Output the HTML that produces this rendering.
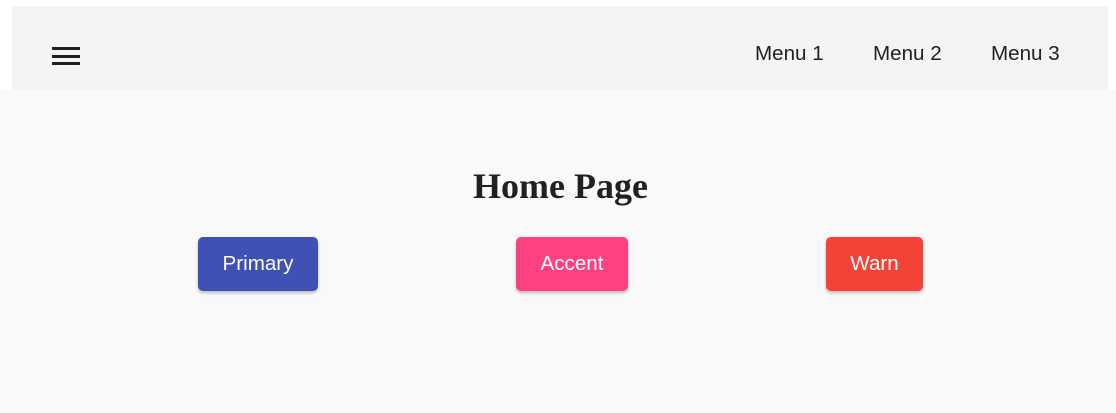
<!DOCTYPE html>
<html><head><style>
body{margin:0;width:1116px;height:413px;background:#fff;position:relative;overflow:hidden;font-family:"Liberation Sans",Arial,sans-serif}
.bot{position:absolute;left:0;top:90px;width:1116px;height:323px;background:#f9f9f9}
.hdr{position:absolute;left:12px;top:6px;width:1096px;height:84px;background:#f4f4f4}
.bar{position:absolute;left:52px;width:28px;height:3px;background:#212121}
.m{position:absolute;top:43px;font-size:20.6px;color:#212121;line-height:22px}
h1{position:absolute;left:0;width:1121px;top:166px;margin:0;text-align:center;font:bold 36px "Liberation Serif",serif;color:#212121;line-height:40px}
.b{position:absolute;top:237px;height:54px;border-radius:5px;color:#fff;font-size:20.6px;line-height:54px;text-align:center;box-shadow:0 2px 3px rgba(0,0,0,.25)}
</style></head><body>
<div class="bot"></div>
<div class="hdr"></div>
<div class="bar" style="top:47px"></div>
<div class="bar" style="top:55px"></div>
<div class="bar" style="top:62px"></div>
<div class="m" style="left:755px">Menu 1</div>
<div class="m" style="left:873px">Menu 2</div>
<div class="m" style="left:991px">Menu 3</div>
<h1>Home Page</h1>
<div class="b" style="left:198px;width:120px;background:#3f51b5">Primary</div>
<div class="b" style="left:516px;width:112px;background:#ff4081">Accent</div>
<div class="b" style="left:826px;width:97px;background:#f44336">Warn</div>
</body></html>
